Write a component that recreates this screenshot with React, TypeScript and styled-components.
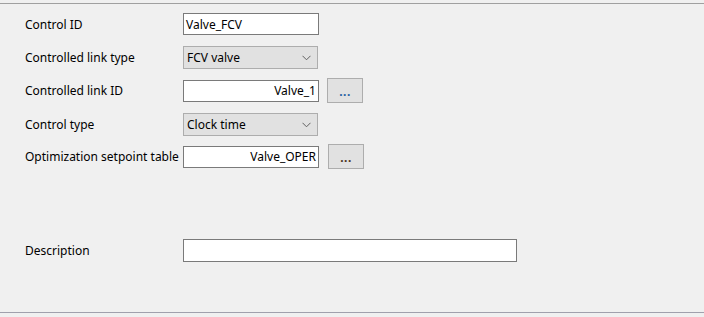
import React from "react";
import styled, { createGlobalStyle } from "styled-components";

const Global = createGlobalStyle`
  html, body { margin: 0; padding: 0; background: #f0f0f0; }
  body { font-family: "Segoe UI", "Noto Sans", "Liberation Sans", sans-serif; font-size: 12px; color: #000; }
`;

const Panel = styled.div`
  margin-top: 3px;
  height: 308px;
  border-top: 1px solid #a0a0a0;
  border-bottom: 1px solid #a0a0ac;
  box-shadow: 0 1px 0 #d4d4da;
  background: #f0f0f0;
  display: flex;
  flex-direction: column;
`;

const Row = styled.div<{ $mt: number; $h: number }>`
  display: flex;
  align-items: center;
  margin-top: ${(p) => p.$mt}px;
  height: ${(p) => p.$h}px;
  padding-left: 25px;
`;

const Label = styled.label`
  width: 158px;
  flex: none;
  white-space: nowrap;
  line-height: 16px;
  padding-top: 1px;
`;

const TextBox = styled.div<{ $w?: number; $h?: number; $right?: boolean }>`
  box-sizing: border-box;
  width: ${(p) => p.$w ?? 136}px;
  height: ${(p) => p.$h ?? 22}px;
  background: #fff;
  border: 1px solid #7a7a7a;
  display: flex;
  align-items: center;
  justify-content: ${(p) => (p.$right ? "flex-end" : "flex-start")};
  padding: 0 2px;
  font-size: 12px;
  white-space: nowrap;
`;

const Select = styled.div`
  box-sizing: border-box;
  width: 135px;
  height: 23px;
  background: #e1e1e1;
  border: 1px solid #adadad;
  display: flex;
  align-items: center;
  justify-content: space-between;
  padding: 0 6px 0 3px;
`;

const Chevron = () => (
  <svg width="9" height="6" viewBox="0 0 9 6">
    <path d="M0.5 0.8 L4.5 4.8 L8.5 0.8" fill="none" stroke="#606060" strokeWidth="1" />
  </svg>
);

const Browse = styled.button<{ $ml: number; $dot: string }>`
  box-sizing: border-box;
  margin-left: ${(p) => p.$ml}px;
  width: 36px;
  height: 25px;
  background: #e1e1e1;
  border: 1px solid #adadad;
  padding: 0;
  font-family: inherit;
  font-size: 12px;
  font-weight: bold;
  color: ${(p) => p.$dot};
  letter-spacing: 0.5px;
  line-height: 1;
  padding-top: 3px;
`;

export default function App() {
  return (
    <>
      <Global />
      <Panel>
        <Row $mt={9} $h={22}>
          <Label>Control ID</Label>
          <TextBox>Valve_FCV</TextBox>
        </Row>
        <Row $mt={11} $h={23}>
          <Label>Controlled link type</Label>
          <Select>
            <span>FCV valve</span>
            <Chevron />
          </Select>
        </Row>
        <Row $mt={9} $h={25}>
          <Label>Controlled link ID</Label>
          <TextBox $right>Valve_1</TextBox>
          <Browse $ml={8} $dot="#1f5fa3">...</Browse>
        </Row>
        <Row $mt={10} $h={23}>
          <Label>Control type</Label>
          <Select>
            <span>Clock time</span>
            <Chevron />
          </Select>
        </Row>
        <Row $mt={8} $h={25}>
          <Label>Optimization setpoint table</Label>
          <TextBox $right>Valve_OPER</TextBox>
          <Browse $ml={9} $dot="#4a3322">...</Browse>
        </Row>
        <Row $mt={70} $h={23}>
          <Label>Description</Label>
          <TextBox $w={334} $h={23} />
        </Row>
      </Panel>
    </>
  );
}
